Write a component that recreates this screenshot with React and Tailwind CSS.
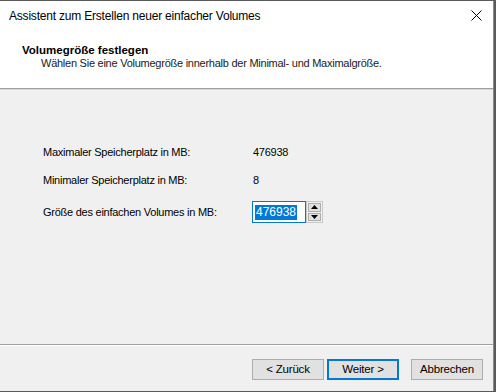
import React from 'react'

const font = { fontFamily: '"Liberation Sans", Arial, sans-serif' }

function Spinner() {
  return (
    <div className="flex flex-col justify-between w-[17px] h-[22px] border border-[#c8c8c8] bg-[#f0f0f0] p-px">
      <div className="flex-1 flex items-center justify-center bg-[#e1e1e1] border border-[#adadad] mb-px">
        <svg width="7" height="4" viewBox="0 0 7 4"><path d="M3.5 0 L7 4 L0 4 Z" fill="#000" /></svg>
      </div>
      <div className="flex-1 flex items-center justify-center bg-[#e1e1e1] border border-[#adadad]">
        <svg width="7" height="4" viewBox="0 0 7 4"><path d="M0 0 L7 0 L3.5 4 Z" fill="#000" /></svg>
      </div>
    </div>
  )
}

function Button({ children, primary }) {
  return (
    <div
      className={
        'w-[72px] h-[21px] flex items-center justify-center bg-[#e1e1e1] text-[11.5px] tracking-[-0.2px] text-black ' +
        (primary ? 'border-2 border-[#0078d7]' : 'border border-[#adadad]')
      }
    >
      {children}
    </div>
  )
}

export default function App() {
  return (
    <div className="w-[496px] h-[392px] bg-[#5a5a5a] pt-px pr-[2px] pb-px overflow-hidden" style={font}>
      <div className="h-[390px] w-[494px] flex flex-col bg-[#f0f0f0] border-r border-[#8a8a8a]">
        {/* title bar */}
        <div className="h-[29px] bg-white flex items-center justify-between pl-[9px] pr-[9px] shrink-0">
          <span className="text-[12px] tracking-[-0.2px] text-black">Assistent zum Erstellen neuer einfacher Volumes</span>
          <svg width="11" height="11" viewBox="0 0 11 11" className="mr-[2px]">
            <path d="M0.5 0.5 L10.5 10.5 M10.5 0.5 L0.5 10.5" stroke="#000" strokeWidth="1" />
          </svg>
        </div>

        {/* header */}
        <div className="h-[58px] bg-white shrink-0 pl-[22px] pt-[13px]">
          <div className="text-[11.5px] font-bold text-black leading-[14px]">Volumegröße festlegen</div>
          <div className="text-[11px] tracking-[-0.25px] text-[#1a1a1a] leading-[13px] pl-[19px]">
            Wählen Sie eine Volumegröße innerhalb der Minimal- und Maximalgröße.
          </div>
        </div>
        <div className="h-px bg-[#a0a0a0] shrink-0" />
        <div className="h-px bg-[#d5d5d5] shrink-0" />

        {/* body */}
        <div className="flex-1 pl-[43px] pt-[55px] text-[11px] tracking-[-0.25px] text-black">
          <div className="flex items-center h-[14px]">
            <span className="w-[210px]">Maximaler Speicherplatz in MB:</span>
            <span>476938</span>
          </div>
          <div className="flex items-center h-[14px] mt-[14px]">
            <span className="w-[210px]">Minimaler Speicherplatz in MB:</span>
            <span>8</span>
          </div>
          <div className="flex items-center mt-[14px]">
            <span className="w-[209px]">Größe des einfachen Volumes in MB:</span>
            <div className="w-[54px] h-[22px] border border-[#0078d7] bg-white flex items-center pl-[2px]">
              <span className="bg-[#0078d7] text-white text-[12px] tracking-normal leading-[15px] px-px">476938</span>
            </div>
            <Spinner />
          </div>
        </div>

        {/* footer */}
        <div className="h-px bg-[#a0a0a0] shrink-0" />
        <div className="h-px bg-white shrink-0" />
        <div className="h-[45px] shrink-0 flex items-start pt-[13px] pl-[252px]">
          <Button>&lt; Zurück</Button>
          <div className="ml-[3px]">
            <Button primary>Weiter &gt;</Button>
          </div>
          <div className="ml-[12px]">
            <Button>Abbrechen</Button>
          </div>
        </div>
      </div>
    </div>
  )
}
